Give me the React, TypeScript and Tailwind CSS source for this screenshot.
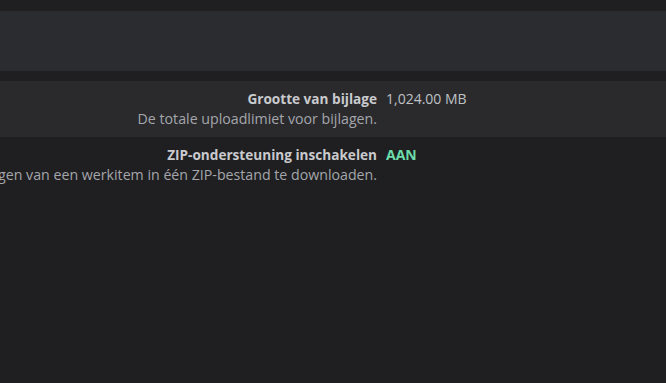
import React from 'react'

type Row = {
  label: string
  description: string
  value: string
  on?: boolean
}

const rows: Row[] = [
  {
    label: 'Grootte van bijlage',
    description: 'De totale uploadlimiet voor bijlagen.',
    value: '1,024.00 MB',
  },
  {
    label: 'ZIP-ondersteuning inschakelen',
    description:
      'Sta gebruikers toe om alle bijlagen van een werkitem in één ZIP-bestand te downloaden.',
    value: 'AAN',
    on: true,
  },
]

const SettingRow: React.FC<{ row: Row; shaded: boolean }> = ({ row, shaded }) => (
  <div className={`flex gap-[9px] py-[9px] ${shaded ? 'bg-[#2a2a2d]' : ''}`}>
    <div className="w-[377px] shrink-0 flex flex-col items-end">
      <div className="flex w-full justify-end">
        <span className="shrink-0 whitespace-nowrap text-[13.6px] leading-[18px] font-bold text-[#c9cacd]">
          {row.label}
        </span>
      </div>
      <div className="flex w-full justify-end mt-[2px]">
        <span className="shrink-0 whitespace-nowrap text-[14.2px] leading-[18px] text-[#a4a6ab]">
          {row.description}
        </span>
      </div>
    </div>
    <div
      className={`text-[14px] leading-[18px] ${
        row.on ? 'font-bold text-[#6bdcaa]' : 'text-[#bfc1c5]'
      }`}
    >
      {row.value}
    </div>
  </div>
)

export default function App() {
  return (
    <div
      className="min-h-[383px] bg-[#1f1f21] overflow-hidden pt-[11px]"
      style={{ fontFamily: '"Open Sans", "Noto Sans", sans-serif' }}
    >
      {/* header panel */}
      <div className="h-[60px] bg-[#2b2c30]" />

      {/* settings */}
      <div className="mt-[10px]">
        {rows.map((row, i) => (
          <SettingRow key={row.label} row={row} shaded={i === 0} />
        ))}
      </div>
    </div>
  )
}
